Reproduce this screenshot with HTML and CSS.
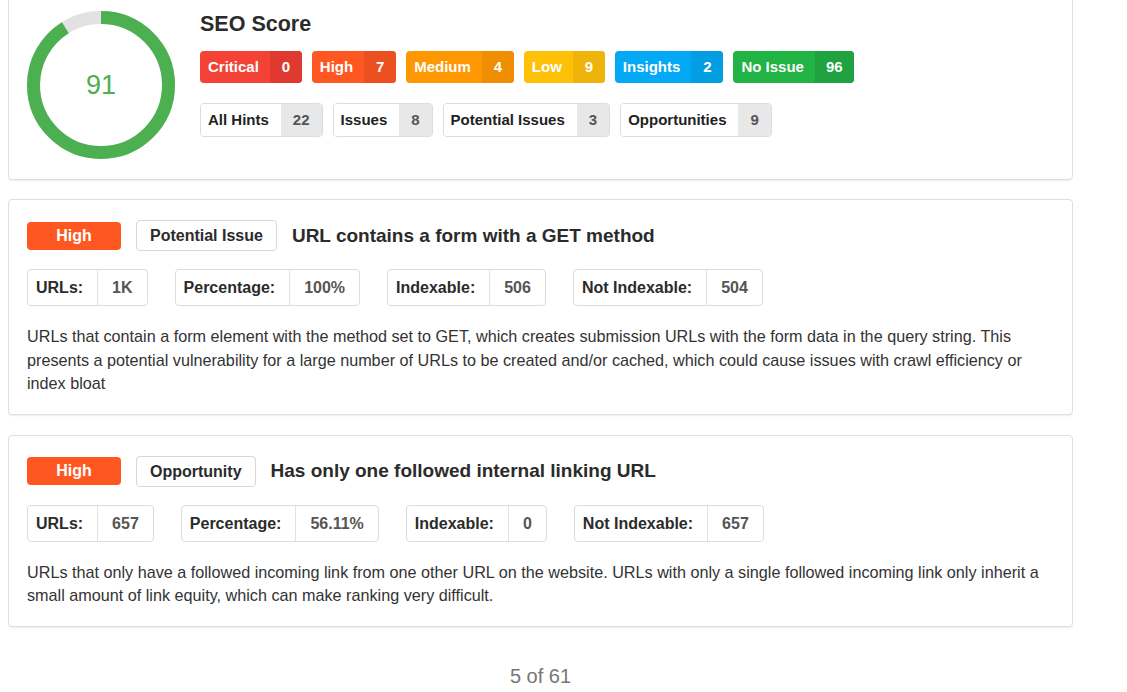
FILE: index.html
```html
<!DOCTYPE html>
<html>
<head>
<meta charset="utf-8">
<link rel="stylesheet" href="styles.css">
</head>
<body>
<div class="page">
  <section class="card score-card">
    <div class="ring">
      <svg width="150" height="150" viewBox="0 0 150 150">
        <circle cx="75" cy="75" r="67.5" fill="none" stroke="#e2e2e2" stroke-width="13"/>
        <circle cx="75" cy="75" r="67.5" fill="none" stroke="#4caf50" stroke-width="13"
          stroke-dasharray="385.9 424.1" transform="rotate(-90 75 75)"/>
      </svg>
      <span class="ring-value">91</span>
    </div>
    <div class="score-info">
      <h1 class="score-title">SEO Score</h1>
      <div class="badge-row">
        <span class="badge critical"><span class="b-label">Critical</span><span class="b-count">0</span></span>
        <span class="badge high"><span class="b-label">High</span><span class="b-count">7</span></span>
        <span class="badge medium"><span class="b-label">Medium</span><span class="b-count">4</span></span>
        <span class="badge low"><span class="b-label">Low</span><span class="b-count">9</span></span>
        <span class="badge insights"><span class="b-label">Insights</span><span class="b-count">2</span></span>
        <span class="badge noissue"><span class="b-label">No Issue</span><span class="b-count">96</span></span>
      </div>
      <div class="badge-row row2">
        <span class="chip"><span class="c-label">All Hints</span><span class="c-count">22</span></span>
        <span class="chip"><span class="c-label">Issues</span><span class="c-count">8</span></span>
        <span class="chip"><span class="c-label">Potential Issues</span><span class="c-count">3</span></span>
        <span class="chip"><span class="c-label">Opportunities</span><span class="c-count">9</span></span>
      </div>
    </div>
  </section>

  <section class="card hint-card">
    <div class="hint-head">
      <span class="prio high-bg">High</span>
      <span class="type">Potential Issue</span>
      <h2 class="hint-title">URL contains a form with a GET method</h2>
    </div>
    <div class="stats">
      <span class="stat"><span class="s-label">URLs:</span><span class="s-value">1K</span></span>
      <span class="stat"><span class="s-label">Percentage:</span><span class="s-value">100%</span></span>
      <span class="stat"><span class="s-label">Indexable:</span><span class="s-value">506</span></span>
      <span class="stat"><span class="s-label">Not Indexable:</span><span class="s-value">504</span></span>
    </div>
    <p class="desc">URLs that contain a form element with the method set to GET, which creates submission URLs with the form data in the query string. This presents a potential vulnerability for a large number of URLs to be created and/or cached, which could cause issues with crawl efficiency or index bloat</p>
  </section>

  <section class="card hint-card">
    <div class="hint-head">
      <span class="prio high-bg">High</span>
      <span class="type">Opportunity</span>
      <h2 class="hint-title">Has only one followed internal linking URL</h2>
    </div>
    <div class="stats">
      <span class="stat"><span class="s-label">URLs:</span><span class="s-value">657</span></span>
      <span class="stat"><span class="s-label">Percentage:</span><span class="s-value">56.11%</span></span>
      <span class="stat"><span class="s-label">Indexable:</span><span class="s-value">0</span></span>
      <span class="stat"><span class="s-label">Not Indexable:</span><span class="s-value">657</span></span>
    </div>
    <p class="desc">URLs that only have a followed incoming link from one other URL on the website. URLs with only a single followed incoming link only inherit a small amount of link equity, which can make ranking very difficult.</p>
  </section>

  <div class="pager">5 of 61</div>
</div>
</body>
</html>
```
FILE: styles.css
```css
* { box-sizing: border-box; }
html, body { background: #fff; }
body {
  margin: 0 54px 0 8px;
  font-family: "Liberation Sans", Arial, sans-serif;
  color: #333;
}
.page {
  margin-top: -9px;
  display: flex;
  flex-direction: column;
}
.card {
  background: #fff;
  border: 1px solid #dedede;
  border-radius: 4px;
  box-shadow: 0 1px 2px rgba(0,0,0,0.07);
}
.score-card {
  display: flex;
  align-items: flex-start;
  padding: 18px 17px 19px 17px;
  gap: 24px;
}
.ring {
  position: relative;
  width: 150px;
  height: 150px;
  flex: none;
}
.ring svg { display: block; }
.ring-value {
  position: absolute;
  inset: 0;
  display: flex;
  align-items: center;
  justify-content: center;
  color: #4caf50;
  font-size: 27px;
}
.score-info {
  display: flex;
  flex-direction: column;
  padding-top: 2px;
}
.score-title {
  margin: 0;
  font-size: 21.5px;
  line-height: 24px;
  font-weight: bold;
  color: #2b2b2b;
}
.badge-row {
  display: flex;
  gap: 10px;
  margin-top: 15px;
}
.badge-row.row2 { margin-top: 20px; }
.badge {
  display: flex;
  height: 32px;
  border-radius: 4px;
  overflow: hidden;
  color: #fff;
  font-weight: bold;
  font-size: 15px;
  line-height: 32px;
}
.b-label { padding: 0 11px 0 8px; }
.b-count { padding: 0 11px; min-width: 32px; text-align: center; }
.critical { background: #f44336; } .critical .b-count { background: #e03a30; }
.high { background: #ff5722; } .high .b-count { background: #ec5020; }
.medium { background: #ff9800; } .medium .b-count { background: #ef8e00; }
.low { background: #ffc107; } .low .b-count { background: #efb40a; }
.insights { background: #03a9f4; } .insights .b-count { background: #039ee2; }
.noissue { background: #22b345; } .noissue .b-count { background: #1fa23f; }
.chip {
  display: flex;
  height: 34px;
  border: 1px solid #dcdcdc;
  border-radius: 4px;
  overflow: hidden;
  font-weight: bold;
  font-size: 15px;
  line-height: 32px;
}
.c-label { padding: 0 12px 0 7px; color: #222; background: #fff; }
.c-count { padding: 0 12px; min-width: 30px; text-align: center; background: #e8e8e8; color: #555; }

.hint-card {
  margin-top: 19px;
  padding: 20px 18px 18px 18px;
}
.hint-card + .hint-card { margin-top: 20px; }
.hint-head {
  display: flex;
  align-items: center;
  gap: 15px;
  height: 31px;
}
.prio {
  width: 94px;
  height: 28px;
  border-radius: 4px;
  color: #fff;
  font-weight: bold;
  font-size: 16px;
  line-height: 28px;
  text-align: center;
}
.high-bg { background: #ff5722; }
.type {
  height: 31px;
  padding: 0 13px;
  border: 1px solid #d8d8d8;
  border-radius: 4px;
  font-weight: bold;
  font-size: 16px;
  line-height: 29px;
  color: #2b2b2b;
}
.hint-title {
  margin: 0;
  font-size: 19px;
  font-weight: bold;
  color: #2b2b2b;
}
.stats {
  display: flex;
  gap: 27px;
  margin-top: 18px;
}
.stat {
  display: flex;
  height: 37px;
  border: 1px solid #dcdcdc;
  border-radius: 4px;
  font-size: 16px;
  line-height: 35px;
  font-weight: bold;
}
.s-label { padding: 0 14px 0 8px; color: #2b2b2b; border-right: 1px solid #e2e2e2; }
.s-value { padding: 0 14px; color: #555; font-weight: bold; }
.desc {
  margin: 19px 0 0 0;
  font-size: 16.2px;
  line-height: 23.5px;
  color: #333;
}
.pager {
  margin-top: 38px;
  text-align: center;
  font-size: 20px;
  color: #777;
}
```
